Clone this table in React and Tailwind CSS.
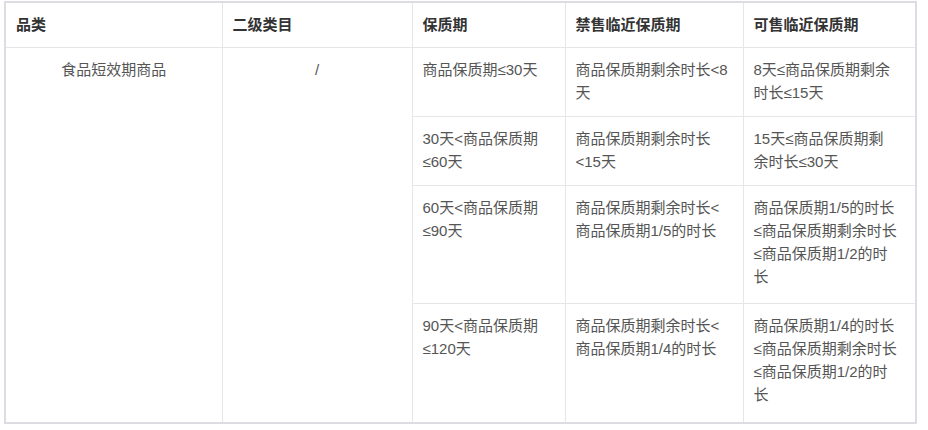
const rows = [
  {
    shelf: ["商品保质期≤30天"],
    ban: ["商品保质期剩余时长<8", "天"],
    sale: ["8天≤商品保质期剩余", "时长≤15天"],
  },
  {
    shelf: ["30天<商品保质期", "≤60天"],
    ban: ["商品保质期剩余时长", "<15天"],
    sale: ["15天≤商品保质期剩", "余时长≤30天"],
  },
  {
    shelf: ["60天<商品保质期", "≤90天"],
    ban: ["商品保质期剩余时长<", "商品保质期1/5的时长"],
    sale: ["商品保质期1/5的时长", "≤商品保质期剩余时长", "≤商品保质期1/2的时", "长"],
  },
  {
    shelf: ["90天<商品保质期", "≤120天"],
    ban: ["商品保质期剩余时长<", "商品保质期1/4的时长"],
    sale: ["商品保质期1/4的时长", "≤商品保质期剩余时长", "≤商品保质期1/2的时", "长"],
  },
];

function Lines({ lines }) {
  return lines.map((l, i) => (
    <div key={i} className="whitespace-nowrap">
      {l}
    </div>
  ));
}

export default function App() {
  const border = "border border-[#e5e6ea] px-[10px]";
  const cell = `${border} align-top pt-[10px] pb-[10px]`;
  return (
    <div
      className="bg-white w-[928px] h-[430px] pl-[4px] pt-[1px] text-[15px] leading-[23px] text-[#555]"
      style={{ fontFamily: '"Liberation Sans", "Noto Sans CJK SC", sans-serif' }}
    >
      <table className="table-fixed border-collapse border-2 border-[#dcdde2] w-[911px]">
        <colgroup>
          <col className="w-[217px]" />
          <col className="w-[190px]" />
          <col className="w-[153px]" />
          <col className="w-[178px]" />
          <col className="w-[173px]" />
        </colgroup>
        <thead>
          <tr className="h-[45px]">
            {["品类", "二级类目", "保质期", "禁售临近保质期", "可售临近保质期"].map((h) => (
              <th key={h} className={`${border} py-0 align-middle text-left font-bold text-[#333]`}>
                {h}
              </th>
            ))}
          </tr>
        </thead>
        <tbody>
          {rows.map((r, i) => (
            <tr key={i} className={i < 2 ? "h-[69px]" : i === 2 ? "h-[118px]" : "h-[120px]"}>
              {i === 0 && (
                <>
                  <td rowSpan={4} className={`${cell} text-center`}>
                    食品短效期商品
                  </td>
                  <td rowSpan={4} className={`${cell} text-center`}>
                    /
                  </td>
                </>
              )}
              <td className={cell}>
                <Lines lines={r.shelf} />
              </td>
              <td className={cell}>
                <Lines lines={r.ban} />
              </td>
              <td className={cell}>
                <Lines lines={r.sale} />
              </td>
            </tr>
          ))}
        </tbody>
      </table>
    </div>
  );
}
